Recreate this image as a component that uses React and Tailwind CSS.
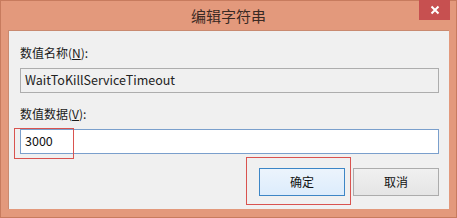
export default function App() {
  const font = { fontFamily: '"Noto Sans CJK SC", "Noto Sans", sans-serif' };
  return (
    <div className="w-[457px] h-[218px] bg-[#e3997c] border border-[#c77b5e] flex flex-col relative" style={font}>
      <div className="h-[29px] flex items-center justify-center relative">
        <span className="text-[15px] text-[#3a2a24] leading-none">编辑字符串</span>
        <div className="absolute right-[6px] top-[-1px] w-[31px] h-[20px] bg-[#c75050] flex items-center justify-center">
          <svg width="10" height="10" viewBox="0 0 10 10">
            <path d="M1.5 1.5 L8.5 8.5 M8.5 1.5 L1.5 8.5" stroke="#fff" strokeWidth="2" />
          </svg>
        </div>
      </div>
      <div className="mx-[7px] h-[179px] bg-[#f0f0f0] border-t border-l border-[#c98a70] flex flex-col px-[11px] relative">
        <div className="mt-[15px] text-[12px] leading-[14px] text-[#1a1a1a]">
          数值名称(<span className="underline">N</span>):
        </div>
        <div className="mt-[8px] h-[25px] w-[419px] border border-[#adadad] bg-[#f0f0f0] flex items-center px-[4px] text-[12.5px] text-[#222]">
          WaitToKillServiceTimeout
        </div>
        <div className="mt-[14px] text-[12px] leading-[14px] text-[#1a1a1a]">
          数值数据(<span className="underline">V</span>):
        </div>
        <div className="mt-[8px] h-[25px] w-[419px] border border-[#7a9fcc] bg-white flex items-center px-[4px] text-[12.5px] text-[#111]">
          3000
        </div>
        <div className="mt-[14px] flex justify-end gap-[8px] w-[419px]">
          <div className="w-[86px] h-[28px] border border-[#3d86c6] bg-gradient-to-b from-[#ecf4fc] to-[#dcecfc] flex items-center justify-center text-[12px] text-[#111]">
            确定
          </div>
          <div className="w-[86px] h-[28px] border border-[#acacac] bg-gradient-to-b from-[#f0f0f0] to-[#e5e5e5] flex items-center justify-center text-[12px] text-[#111]">
            取消
          </div>
        </div>
        <div className="absolute left-[5px] top-[97px] w-[60px] h-[31px] border border-[#d9534f]"></div>
        <div className="absolute left-[237px] top-[126px] w-[105px] h-[48px] border border-[#d9534f]"></div>
      </div>
    </div>
  );
}
